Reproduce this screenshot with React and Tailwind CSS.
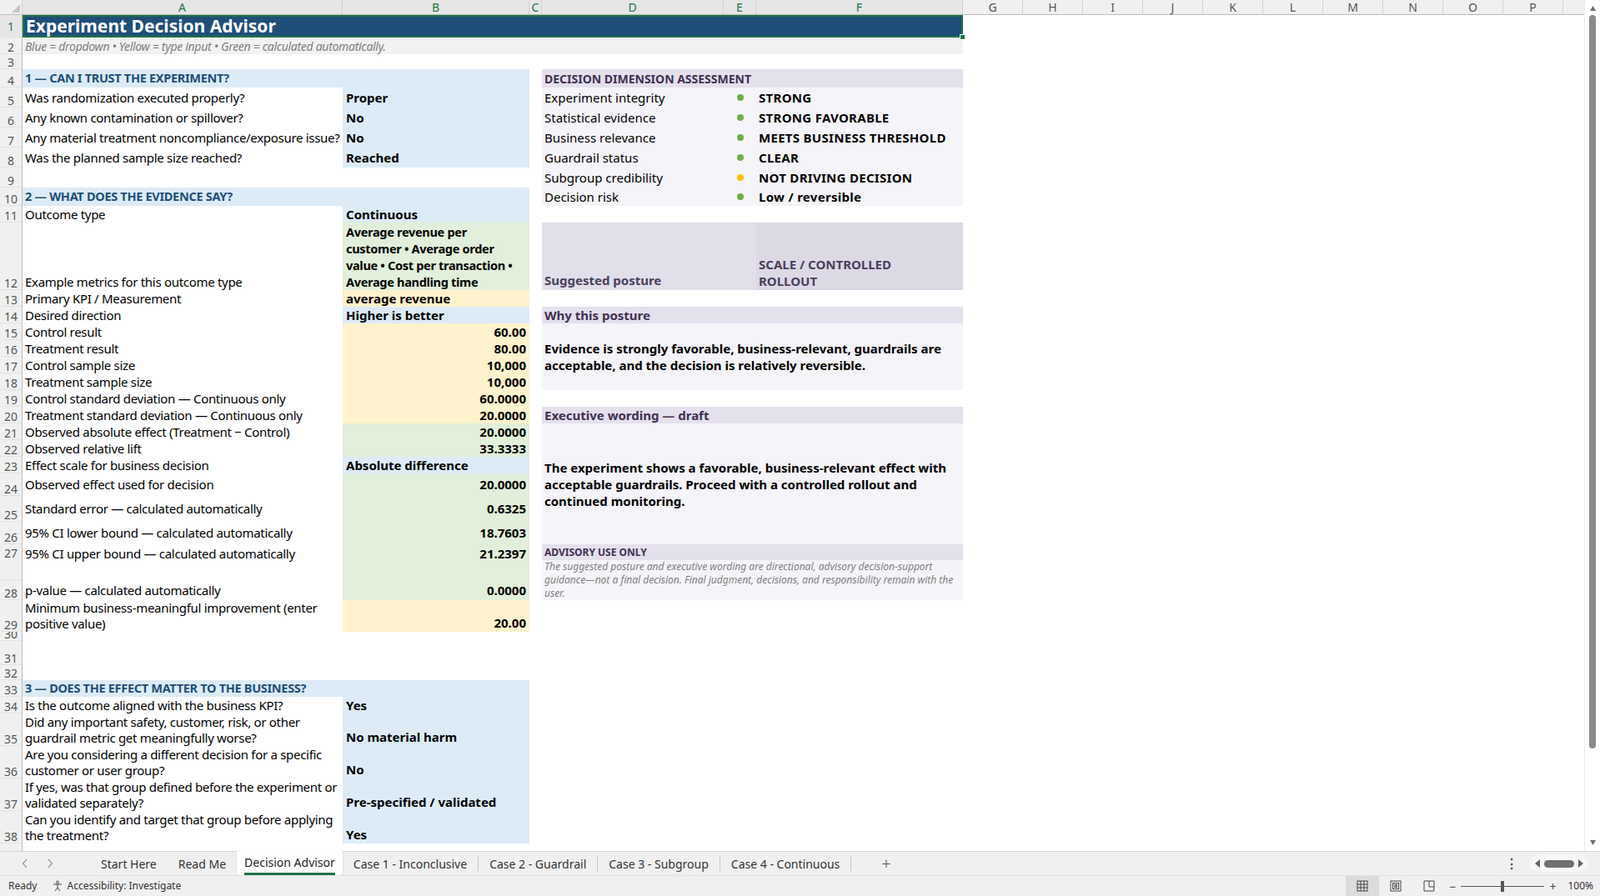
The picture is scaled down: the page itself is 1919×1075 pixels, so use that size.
import React from 'react';

const colHeads = [
  ['A', 'w-[384px]', true], ['B', 'w-[224px]', true], ['C', 'w-[15px]', true], ['D', 'w-[218px]', true],
  ['E', 'w-[39px]', true], ['F', 'w-[248px]', true], ['G', 'w-[72px]'], ['H', 'w-[72px]'], ['I', 'w-[72px]'],
  ['J', 'w-[72px]'], ['K', 'w-[72px]'], ['L', 'w-[72px]'], ['M', 'w-[72px]'], ['N', 'w-[72px]'],
  ['O', 'w-[72px]'], ['P', 'w-[72px]'],
];

const rowHeights = [
  'h-[27px]', 'h-[20px]', 'h-[18px]', 'h-[22px]', 'h-[24px]', 'h-[24px]', 'h-[24px]', 'h-[24px]', 'h-[24px]',
  'h-[22px]', 'h-[20px]', 'h-[81px]', 'h-[20px]', 'h-[20px]', 'h-[20px]', 'h-[20px]', 'h-[20px]', 'h-[20px]',
  'h-[20px]', 'h-[20px]', 'h-[20px]', 'h-[20px]', 'h-[20px]', 'h-[27px]', 'h-[31px]', 'h-[27px]', 'h-[43px]',
  'h-[24px]', 'h-[38px]', 'h-[11px]', 'h-[29px]', 'h-[18px]', 'h-[20px]', 'h-[20px]', 'h-[39px]', 'h-[39px]',
  'h-[39px]', 'h-[39px]', 'h-[40px]',
];

const lbl = 'col-start-1 flex px-[3px] text-[15px] leading-[19px] tracking-[-0.3px] text-black';
const val = 'col-start-2 flex px-[4px] text-[15px] leading-[19px] font-bold text-black';
const blue = 'bg-[#ddebf7]';
const yellow = 'bg-[#fff2cc]';
const green = 'bg-[#e2efda]';

const leftRows = [
  ['row-start-5', 'Was randomization executed properly?', 'Proper', blue],
  ['row-start-6', 'Any known contamination or spillover?', 'No', blue],
  ['row-start-7', 'Any material treatment noncompliance/exposure issue?', 'No', blue],
  ['row-start-8', 'Was the planned sample size reached?', 'Reached', blue],
  ['row-start-11', 'Outcome type', 'Continuous', blue],
  ['row-start-13', 'Primary KPI / Measurement', 'average revenue', yellow],
  ['row-start-14', 'Desired direction', 'Higher is better', blue],
  ['row-start-15', 'Control result', '60.00', yellow, 'num'],
  ['row-start-16', 'Treatment result', '80.00', yellow, 'num'],
  ['row-start-17', 'Control sample size', '10,000', yellow, 'num'],
  ['row-start-18', 'Treatment sample size', '10,000', yellow, 'num'],
  ['row-start-19', 'Control standard deviation — Continuous only', '60.0000', yellow, 'num'],
  ['row-start-20', 'Treatment standard deviation — Continuous only', '20.0000', yellow, 'num'],
  ['row-start-21', 'Observed absolute effect (Treatment − Control)', '20.0000', green, 'num'],
  ['row-start-22', 'Observed relative lift', '33.3333', green, 'num'],
  ['row-start-23', 'Effect scale for business decision', 'Absolute difference', blue],
  ['row-start-24', 'Observed effect used for decision', '20.0000', green, 'num'],
  ['row-start-25', 'Standard error — calculated automatically', '0.6325', green, 'num'],
  ['row-start-26', '95% CI lower bound — calculated automatically', '18.7603', green, 'num'],
  ['row-start-27', '95% CI upper bound — calculated automatically', '21.2397', green, 'top'],
  ['row-start-28', 'p-value — calculated automatically', '0.0000', green, 'num'],
  ['row-start-29', 'Minimum business-meaningful improvement (enter positive value)', '20.00', yellow, 'numb'],
  ['row-start-34', 'Is the outcome aligned with the business KPI?', 'Yes', blue],
  ['row-start-35', 'Did any important safety, customer, risk, or other guardrail metric get meaningfully worse?', 'No material harm', blue, 'bottom'],
  ['row-start-36', 'Are you considering a different decision for a specific customer or user group?', 'No', blue, 'bottom'],
  ['row-start-37', 'If yes, was that group defined before the experiment or validated separately?', 'Pre-specified / validated', blue, 'bottom'],
  ['row-start-38', 'Can you identify and target that group before applying the treatment?', 'Yes', blue, 'bottom'],
];

const dims = [
  ['row-start-5', 'Experiment integrity', 'STRONG', 'bg-[#70ad47]'],
  ['row-start-6', 'Statistical evidence', 'STRONG FAVORABLE', 'bg-[#70ad47]'],
  ['row-start-7', 'Business relevance', 'MEETS BUSINESS THRESHOLD', 'bg-[#70ad47]'],
  ['row-start-8', 'Guardrail status', 'CLEAR', 'bg-[#70ad47]'],
  ['row-start-9', 'Subgroup credibility', 'NOT DRIVING DECISION', 'bg-[#ffc000]'],
  ['row-start-10', 'Decision risk', 'Low / reversible', 'bg-[#70ad47]'],
];

const tabs = ['Start Here', 'Read Me', 'Decision Advisor', 'Case 1 - Inconclusive', 'Case 2 - Guardrail', 'Case 3 - Subgroup', 'Case 4 - Continuous'];

function Sheet() {
  return (
    <div className="grid grid-cols-[384px_224px_15px_218px_39px_248px_repeat(11,72px)] grid-rows-[27px_20px_18px_22px_24px_24px_24px_24px_24px_22px_20px_81px_20px_20px_20px_20px_20px_20px_20px_20px_20px_20px_20px_27px_31px_27px_43px_24px_38px_11px_29px_18px_20px_20px_39px_39px_39px_39px_40px]">
      {/* title */}
      <div className="col-start-1 col-span-6 row-start-1 relative bg-[#1f4e78] border-2 border-[#217346] flex items-center px-[2px] text-white font-bold text-[21px] leading-none">
        Experiment Decision Advisor
        <div className="absolute -right-[5px] -bottom-[5px] w-[7px] h-[7px] bg-[#217346] border border-white" />
      </div>
      <div className="col-start-1 col-span-6 row-start-2 bg-[#f2f2f2] flex items-center px-[3px] text-[14px] italic text-[#7f7f7f] tracking-[-0.3px]">
        Blue = dropdown • Yellow = type input • Green = calculated automatically.
      </div>

      {/* section headers */}
      <div className="col-start-1 col-span-2 row-start-4 bg-[#ddebf7] flex items-center px-[3px] text-[14.5px] font-bold text-[#1f4e78] tracking-[-0.3px]">1 — CAN I TRUST THE EXPERIMENT?</div>
      <div className="col-start-1 col-span-2 row-start-10 bg-[#ddebf7] flex items-center px-[3px] text-[14.5px] font-bold text-[#1f4e78] tracking-[-0.3px]">2 — WHAT DOES THE EVIDENCE SAY?</div>
      <div className="col-start-1 col-span-2 row-start-33 bg-[#ddebf7] flex items-center px-[3px] text-[14.5px] font-bold text-[#1f4e78] tracking-[-0.3px]">3 — DOES THE EFFECT MATTER TO THE BUSINESS?</div>

      {leftRows.map(([r, l, v, bg, kind]) => {
        const lAlign = kind === 'bottom' || kind === 'numb' ? 'items-end' : kind === 'top' ? 'items-start pt-[2px]' : 'items-center';
        const vAlign = kind === 'num' ? 'items-center justify-end' : kind === 'numb' ? 'items-end justify-end pb-[1px]' : kind === 'top' ? 'items-start justify-end pt-[2px]' : kind === 'bottom' ? 'items-end pb-[1px]' : 'items-center';
        return (
          <React.Fragment key={r}>
            <div className={`${lbl} ${r} ${lAlign}`}>{l}</div>
            <div className={`${val} ${r} ${bg} ${vAlign}`}>{v}</div>
          </React.Fragment>
        );
      })}
      <div className={`${lbl} row-start-12 items-end`}>Example metrics for this outcome type</div>
      <div className={`col-start-2 row-start-12 ${green} flex items-end px-[4px] text-[14.5px] leading-[20px] font-bold tracking-[-0.3px] whitespace-nowrap`}>
        Average revenue per<br />customer • Average order<br />value • Cost per transaction •<br />Average handling time
      </div>

      {/* decision dimension assessment */}
      <div className="col-start-4 col-span-3 row-start-4 bg-[#e4e0ec] flex items-center px-[3px] text-[14px] font-bold text-[#3f3151]">DECISION DIMENSION ASSESSMENT</div>
      <div className="col-start-4 col-span-3 row-start-5 row-span-6 bg-[#f5f4f9]" />
      {dims.map(([r, l, v, dot]) => (
        <React.Fragment key={r}>
          <div className={`col-start-4 ${r} flex items-center px-[3px] text-[15px] text-black`}>{l}</div>
          <div className={`col-start-5 ${r} flex items-center justify-center`}>
            <div className={`w-[8px] h-[8px] rounded-full ${dot}`} />
          </div>
          <div className={`col-start-6 ${r} flex items-center px-[3px] text-[15px] font-bold text-black tracking-[0.3px] whitespace-nowrap`}>{v}</div>
        </React.Fragment>
      ))}

      <div className="col-start-4 col-span-2 row-start-12 bg-[#e1dfea] flex items-end px-[3px] pb-[1px] text-[15px] font-bold text-[#4a3f5c]">Suggested posture</div>
      <div className="col-start-6 row-start-12 bg-[#dcd9e5] flex items-end px-[3px] pb-[1px] text-[15px] leading-[20px] font-bold text-[#4a3f5c]">
        SCALE / CONTROLLED<br />ROLLOUT
      </div>

      <div className="col-start-4 col-span-3 row-start-14 bg-[#e4e0ec] flex items-center px-[3px] text-[15px] font-bold text-[#3f3151]">Why this posture</div>
      <div className="col-start-4 col-span-3 row-start-15 row-span-4 bg-[#f5f4f9] flex items-center px-[3px] text-[15px] leading-[20px] font-bold text-black">
        Evidence is strongly favorable, business-relevant, guardrails are acceptable, and the decision is relatively reversible.
      </div>

      <div className="col-start-4 col-span-3 row-start-20 bg-[#e4e0ec] flex items-center px-[3px] text-[15px] font-bold text-[#3f3151]">Executive wording — draft</div>
      <div className="col-start-4 col-span-3 row-start-21 row-span-6 bg-[#f5f4f9] flex items-center px-[3px] text-[15px] leading-[20px] font-bold text-black">
        The experiment shows a favorable, business-relevant effect with acceptable guardrails. Proceed with a controlled rollout and continued monitoring.
      </div>

      <div className="col-start-4 col-span-3 row-start-27 row-span-2 flex flex-col">
        <div className="h-[19px] bg-[#e4e0ec] flex items-center px-[3px] text-[12px] font-bold text-[#3f3151]">ADVISORY USE ONLY</div>
        <div className="flex-1 bg-[#f5f4f9] px-[3px] text-[12px] leading-[16px] italic text-[#7f7f7f]">
          The suggested posture and executive wording are directional, advisory decision-support guidance—not a final decision. Final judgment, decisions, and responsibility remain with the user.
        </div>
      </div>
    </div>
  );
}

function Chevron({ dir }) {
  return (
    <svg width="8" height="12" viewBox="0 0 8 12" className="text-[#9a9a9a]">
      <path d={dir === 'l' ? 'M6 1 L1.5 6 L6 11' : 'M2 1 L6.5 6 L2 11'} fill="none" stroke="currentColor" strokeWidth="1.2" />
    </svg>
  );
}

export default function App() {
  return (
    <div className="w-[1919px] h-[1075px] flex flex-col overflow-hidden bg-white font-[family-name:'Liberation_Sans',Arial,sans-serif]">
      <div className="h-[1021px] flex">
        <div className="flex-1 flex flex-col overflow-hidden">
          {/* column headers */}
          <div className="h-[18px] flex shrink-0 bg-[#f0f0f0] border-b border-[#bdbdbd]">
            <div className="w-[27px] shrink-0 relative border-r border-[#d4d4d4]">
              <div className="absolute right-[2px] bottom-[2px] w-0 h-0 border-l-[10px] border-l-transparent border-b-[10px] border-b-[#c8c8c8]" />
            </div>
            {colHeads.map(([c, w, sel]) => (
              <div key={c} className={`${w} shrink-0 flex items-center justify-center text-[14px] border-r border-[#d4d4d4] ${sel ? 'text-[#217346] bg-[#e6e6e6]' : 'text-[#555]'}`}>{c}</div>
            ))}
          </div>
          <div className="flex flex-1 overflow-hidden">
            <div className="w-[27px] shrink-0 flex flex-col bg-[#f0f0f0] border-r border-[#bdbdbd]">
              {rowHeights.map((h, i) => (
                <div key={i} className={`${h} shrink-0 overflow-hidden flex justify-center leading-[15px] text-[14px] border-b border-[#e3e3e3] ${i === 0 ? 'text-[#217346] bg-[#e6e6e6] items-center' : i === 26 ? 'items-start pt-[3px] text-[#555]' : 'items-end text-[#555]'}`}>{i + 1}</div>
              ))}
            </div>
            <Sheet />
          </div>
        </div>
        {/* vertical scrollbar */}
        <div className="w-[19px] shrink-0 bg-white flex flex-col items-center border-l border-[#ececec]">
          <svg width="9" height="8" viewBox="0 0 9 8" className="mt-[6px]"><path d="M4.5 1 L8 7 L1 7 Z" fill="#6e6e6e" /></svg>
          <div className="w-[8px] h-[880px] mt-[4px] rounded-full bg-[#8b8b8b]" />
          <div className="flex-1" />
          <svg width="9" height="8" viewBox="0 0 9 8" className="mb-[6px]"><path d="M1 1 L8 1 L4.5 7 Z" fill="#6e6e6e" /></svg>
        </div>
      </div>

      {/* sheet tabs */}
      <div className="h-[29px] flex items-stretch bg-[#f0f0f0] border-t border-[#d6d6d6] text-[14px] text-[#333]">
        <div className="w-[108px] flex items-center gap-[22px] pl-[26px]">
          <Chevron dir="l" />
          <Chevron dir="r" />
        </div>
        {tabs.map((t, i) => (
          <div key={t} className="flex items-stretch">
            {t === 'Decision Advisor' ? (
              <div className="flex flex-col items-center bg-white px-[9px] -mt-[1px] rounded-b-[4px] shadow-[0_1px_2px_rgba(0,0,0,0.15)]">
                <span className="pt-[3px] text-[#222]">{t}</span>
                <div className="w-full h-[3px] bg-[#217346] mt-[2px]" />
              </div>
            ) : (
              <div className="flex items-center px-[13px]">{t}</div>
            )}
            {i >= 3 && <div className="w-px my-[5px] bg-[#c6c6c6]" />}
          </div>
        ))}
        <div className="flex items-center pl-[36px] text-[20px] text-[#555] font-light">+</div>
        <div className="flex-1" />
        <div className="flex items-center pr-[14px] text-[#555] text-[16px] font-bold">⋮</div>
        <div className="flex items-center gap-[4px] mr-[14px] my-[4px] px-[6px] rounded-full bg-[#f7f7f7]">
          <svg width="7" height="10" viewBox="0 0 7 10"><path d="M6 0 L0 5 L6 10 Z" fill="#666" /></svg>
          <div className="w-[36px] h-[9px] rounded-full bg-[#6f6f6f]" />
          <svg width="7" height="10" viewBox="0 0 7 10"><path d="M1 0 L7 5 L1 10 Z" fill="#666" /></svg>
        </div>
      </div>

      {/* status bar */}
      <div className="h-[25px] flex items-center bg-[#f0f0f0] border-t border-[#e2e2e2] text-[12px] text-[#333]">
        <span className="pl-[10px]">Ready</span>
        <span className="flex items-center gap-[4px] pl-[18px]">
          <svg width="14" height="14" viewBox="0 0 14 14" fill="none" stroke="#444" strokeWidth="1">
            <circle cx="7" cy="2.5" r="1.5" />
            <path d="M2 5 L12 5 M7 5 L7 9 M7 9 L4 13 M7 9 L10 13" />
          </svg>
          Accessibility: Investigate
        </span>
        <div className="flex-1" />
        <div className="h-full w-[40px] flex items-center justify-center bg-[#dcdcdc]">
          <svg width="14" height="14" viewBox="0 0 14 14" fill="none" stroke="#444" strokeWidth="1"><rect x="1" y="1" width="12" height="12" /><path d="M1 5 H13 M1 9 H13 M5 1 V13 M9 1 V13" /></svg>
        </div>
        <div className="w-[40px] flex items-center justify-center">
          <svg width="14" height="14" viewBox="0 0 14 14" fill="none" stroke="#444" strokeWidth="1"><rect x="1" y="1" width="12" height="12" /><rect x="3.5" y="3.5" width="7" height="7" /><path d="M5 5.5 H9 M5 7 H9 M5 8.5 H9" /></svg>
        </div>
        <div className="w-[40px] flex items-center justify-center">
          <svg width="14" height="14" viewBox="0 0 14 14" fill="none" stroke="#444" strokeWidth="1"><path d="M1 1 H13 V13 H1 Z M7 1 V8 H13" /></svg>
        </div>
        <div className="flex items-center ml-[4px] gap-[6px]">
          <span className="text-[14px] text-[#444]">−</span>
          <div className="relative w-[100px] h-px bg-[#555]">
            <div className="absolute left-[48px] -top-[6px] w-[4px] h-[13px] bg-[#555]" />
          </div>
          <span className="text-[14px] text-[#444]">+</span>
        </div>
        <span className="pl-[14px] pr-[8px]">100%</span>
      </div>
    </div>
  );
}
